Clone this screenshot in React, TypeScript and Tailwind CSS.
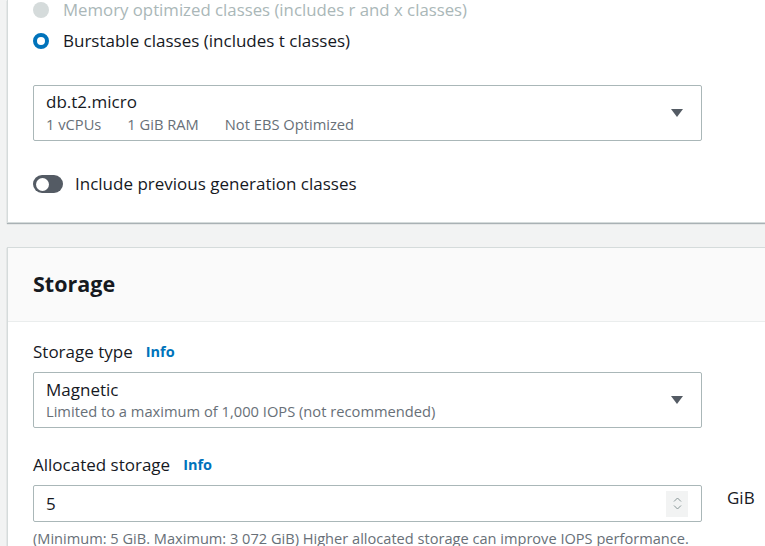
import React from 'react';

function Caret() {
    return (
        <svg width="14" height="10" viewBox="0 0 14 10" className="shrink-0">
            <path d="M1 1 H13 L7 9 Z" fill="#545b64" />
        </svg>
    );
}

function Info() {
    return <span className="ml-[13px] text-[14.5px] font-bold text-[#0073bb]">Info</span>;
}

export default function App() {
    return (
        <div className="w-[765px] h-[546px] overflow-hidden bg-[#f2f3f3] text-[#16191f]" style={{fontFamily: '"Open Sans", "Noto Sans", sans-serif'}}>
            {/* instance class panel, top is scrolled away */}
            <div className="ml-[7px] w-[800px] bg-white border-l border-b border-[#d5dbdb] shadow-[0_1px_1px_rgba(0,28,36,0.3)] pl-[25px] pb-[28px]">
                <div className="flex items-center h-[20px]">
                    <span className="w-[16px] h-[16px] rounded-full bg-[#d5dbdb]" />
                    <span className="ml-[14px] text-[16.8px] leading-[20px] text-[#aab7b8]">Memory optimized classes (includes r and x classes)</span>
                </div>
                <div className="flex items-center h-[20px] mt-[11px]">
                    <span className="w-[16px] h-[16px] rounded-full border-[4px] border-[#0073bb] bg-white box-border" />
                    <span className="ml-[14px] text-[17px]">Burstable classes (includes t classes)</span>
                </div>
                <div className="mt-[34px] w-[669px] h-[56px] border border-[#aab7b8] rounded-[2px] flex items-center pl-[12px] pr-[17px]">
                    <div className="flex-1">
                        <div className="text-[17px] leading-[20px]">db.t2.micro</div>
                        <div className="text-[14.7px] leading-[20px] text-[#687078] flex gap-[26px] mt-[2px]">
                            <span>1 vCPUs</span>
                            <span>1 GiB RAM</span>
                            <span>Not EBS Optimized</span>
                        </div>
                    </div>
                    <Caret />
                </div>
                <div className="mt-[33px] flex items-center h-[20px]">
                    <span className="w-[30px] h-[18px] rounded-full bg-[#545b64] flex items-center pl-[3px]">
                        <span className="w-[13px] h-[13px] rounded-full bg-white" />
                    </span>
                    <span className="ml-[12px] text-[17px]">Include previous generation classes</span>
                </div>
            </div>

            {/* storage panel */}
            <div className="mt-[24px] ml-[7px] w-[800px] bg-white border-l border-t border-[#d5dbdb] shadow-[0_1px_1px_rgba(0,28,36,0.3)]">
                <div className="h-[74px] bg-[#fafafa] border-b border-[#eaeded] pl-[25px] flex items-center">
                    <h2 className="text-[21.5px] font-bold">Storage</h2>
                </div>
                <div className="pl-[25px] pt-[19px]">
                    <div className="flex items-center h-[22px] text-[17px]">
                        Storage type<Info />
                    </div>
                    <div className="mt-[9px] w-[669px] h-[56px] border border-[#aab7b8] rounded-[2px] flex items-center pl-[12px] pr-[17px]">
                        <div className="flex-1">
                            <div className="text-[17px] leading-[20px]">Magnetic</div>
                            <div className="text-[14.7px] leading-[18px] text-[#687078] mt-[2px]">Limited to a maximum of 1,000 IOPS (not recommended)</div>
                        </div>
                        <Caret />
                    </div>
                    <div className="mt-[26px] flex items-center h-[22px] text-[17px]">
                        Allocated storage<Info />
                    </div>
                    <div className="mt-[9px] flex items-center">
                        <div className="w-[669px] h-[37px] border border-[#aab7b8] rounded-[2px] flex items-center pl-[12px] pr-[13px]">
                            <span className="flex-1 text-[17px]">5</span>
                            <span className="w-[22px] h-[26px] bg-[#f2f3f3] flex flex-col items-center justify-center gap-[3px]">
                                <svg width="9" height="5" viewBox="0 0 9 5"><path d="M1 4.5 L4.5 1 L8 4.5" fill="none" stroke="#879596" strokeWidth="1" /></svg>
                                <svg width="9" height="5" viewBox="0 0 9 5"><path d="M1 0.5 L4.5 4 L8 0.5" fill="none" stroke="#879596" strokeWidth="1" /></svg>
                            </span>
                        </div>
                        <span className="ml-[25px] text-[17px] -mt-[12px]">GiB</span>
                    </div>
                    <div className="mt-[8px] text-[14.6px] leading-[16px] text-[#687078]">(Minimum: 5 GiB. Maximum: 3 072 GiB) Higher allocated storage can improve IOPS performance.</div>
                </div>
            </div>
        </div>
    );
}
